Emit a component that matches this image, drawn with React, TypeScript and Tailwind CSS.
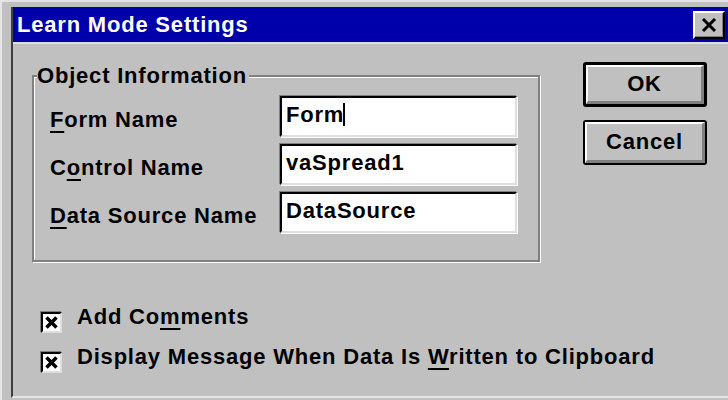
import type { ReactNode } from "react";

const font = "font-['Liberation_Sans',Arial,sans-serif] font-bold text-[22px] leading-[24px] tracking-[0.8px]";

// Win 3.x style raised button
function Button({ children, isDefault }: { children: ReactNode; isDefault?: boolean }) {
    return (
        <button
            className={
                "w-[124px] h-[45px] bg-[#c0c0c0] rounded-[3px] border-black p-0 " +
                (isDefault ? "border-[3px]" : "border-2")
            }
        >
            <div className="w-full h-full flex items-center justify-center border-t-2 border-l-2 border-white border-r-[3px] border-b-[3px] border-r-[#808080] border-b-[#808080] text-black">
                {children}
            </div>
        </button>
    );
}

function Field({ label, value, caret }: { label: ReactNode; value: string; caret?: boolean }) {
    return (
        <div className="flex items-center h-[41px]">
            <div className="w-[230px] pt-[6px] text-black">{label}</div>
            <div className="w-[237px] h-[41px] bg-white border-2 border-t-black border-l-black border-r-[#dfdfdf] border-b-[#dfdfdf] shadow-[-1px_-1px_0_#808080,1px_1px_0_#ffffff] flex items-center pl-[4px] pb-[4px] text-black">
                <span>{value}</span>
                {caret && <span className="w-[2px] h-[23px] bg-black ml-[-1px]" />}
            </div>
        </div>
    );
}

function Check({ children }: { children: ReactNode }) {
    return (
        <div className="flex items-start gap-[15px]">
            <div className="mt-[7px] w-[21px] h-[21px] bg-white border-2 border-t-black border-l-black border-r-[#dfdfdf] border-b-[#dfdfdf] shadow-[-1px_-1px_0_#808080] flex items-center justify-center">
                <svg width="13" height="13" viewBox="0 0 13 13">
                    <path d="M1.5 1.5 L11.5 11.5 M11.5 1.5 L1.5 11.5" stroke="black" strokeWidth="3.5" />
                </svg>
            </div>
            <div className="text-black">{children}</div>
        </div>
    );
}

const U = ({ children }: { children: ReactNode }) => (
    <span className="underline decoration-2 underline-offset-[4px]">{children}</span>
);

export default function App() {
    return (
        <div className={"w-[728px] h-[400px] bg-[#c0c0c0] pl-[11px] pt-[7px] shadow-[inset_2px_2px_0_#e4e4e4] overflow-hidden " + font}>
            <div className="h-[391px] border-l-2 border-b-2 border-l-[#404040] border-b-[#e4e4e4] flex flex-col">
                {/* Title bar */}
                <div className="h-[35px] bg-[#0000aa] flex items-center justify-between pl-[4px] pr-[3px] shrink-0">
                    <span className="text-white">Learn Mode Settings</span>
                    <div className="w-[32px] h-[28px] bg-[#c0c0c0] border-t-2 border-l-2 border-white border-r-2 border-b-2 border-r-black border-b-black shadow-[inset_-1px_-1px_0_#808080] flex items-center justify-center">
                        <svg width="16" height="14" viewBox="0 0 16 14">
                            <path d="M2 1 L14 13 M14 1 L2 13" stroke="black" strokeWidth="3" />
                        </svg>
                    </div>
                </div>

                {/* Dialog body */}
                <div className="flex-1 border-t-2 border-[#dfdfdf] pl-[19px] pt-[18px]">
                    <div className="flex items-start">
                        {/* Object Information group */}
                        <div className="relative mt-[13px] w-[508px] h-[187px] border-2 border-[#808080] shadow-[inset_1px_1px_0_#ffffff,1px_1px_0_#ffffff]">
                            <div className="absolute left-[3px] top-0 -translate-y-1/2 -mt-[1px] bg-[#c0c0c0] pr-[2px] text-black">
                                Object Information
                            </div>
                            <div className="flex flex-col gap-[7px] pt-[19px] pl-[16px]">
                                <Field label={<><U>F</U>orm Name</>} value="Form" caret />
                                <Field label={<>C<U>o</U>ntrol Name</>} value="vaSpread1" />
                                <Field label={<><U>D</U>ata Source Name</>} value="DataSource" />
                            </div>
                        </div>

                        {/* Buttons */}
                        <div className="ml-[43px] flex flex-col gap-[13px]">
                            <Button isDefault>OK</Button>
                            <Button>Cancel</Button>
                        </div>
                    </div>

                    {/* Options */}
                    <div className="mt-[43px] pl-[9px] flex flex-col gap-[12px]">
                        <Check>Add Co<U>m</U>ments</Check>
                        <Check>Display Message When Data Is <U>W</U>ritten to Clipboard</Check>
                    </div>
                </div>
            </div>
        </div>
    );
}
